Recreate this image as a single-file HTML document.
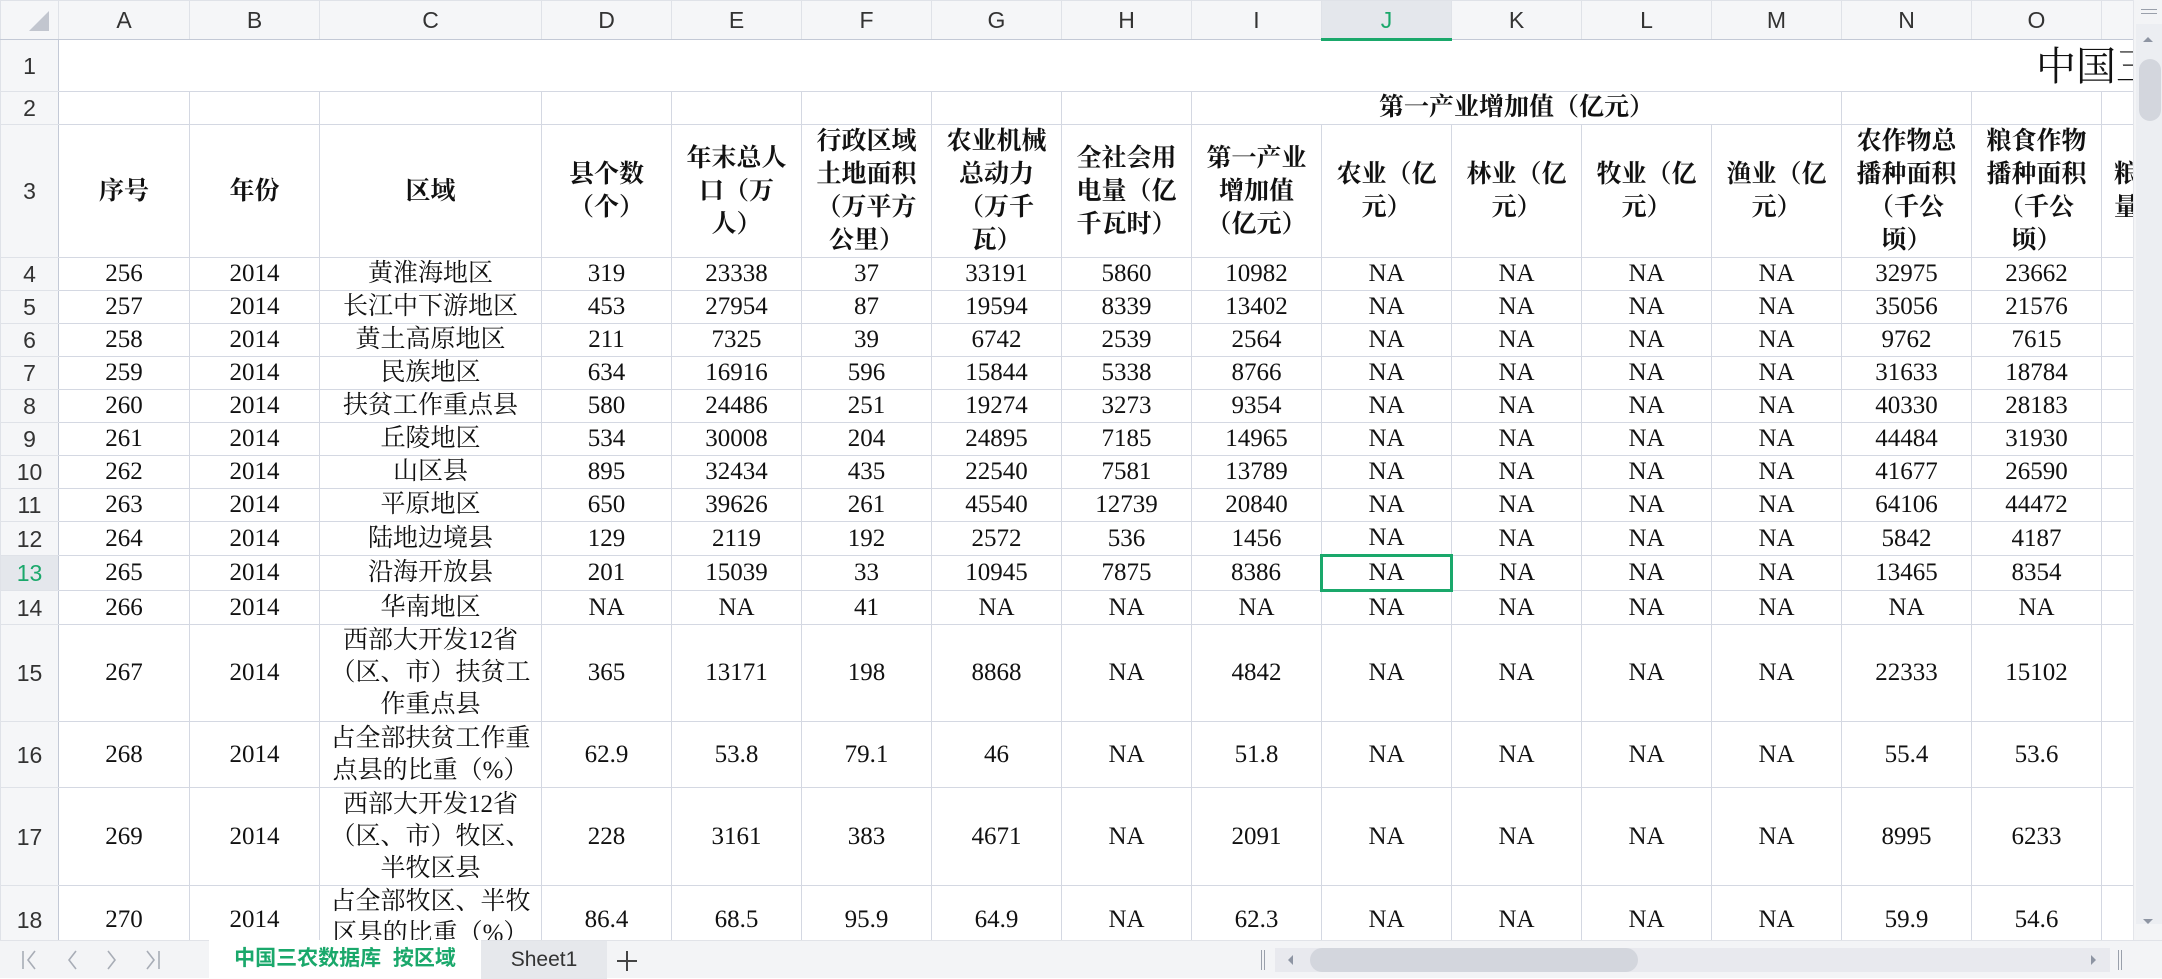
<!DOCTYPE html>
<html><head><meta charset="utf-8">
<style>
*{margin:0;padding:0;box-sizing:border-box}
body{width:2162px;height:978px;overflow:hidden;background:#fff;font-family:"Liberation Serif","Noto Serif CJK SC",serif;position:relative}
#grid{position:absolute;left:0;top:0;width:2133px;height:940px;overflow:hidden}
table{border-collapse:collapse;table-layout:fixed;width:2240px}
td{border:1px solid #d4d8e2;text-align:center;vertical-align:middle;font-size:25px;line-height:32px;color:#111;white-space:nowrap;overflow:hidden;padding:0}
tr.ch td{background:#f5f6f8;font-family:"Liberation Sans",sans-serif;font-size:23px;color:#333;border-color:#dfe2e8;border-bottom:1px solid #c3c9d6;height:39px}
td.rh{background:#f5f6f8;font-family:"Liberation Sans",sans-serif;font-size:23px;color:#333;border-color:#dfe2e8;border-right:1px solid #c3c9d6}
tr.h3 td:not(.rh){font-weight:bold;font-family:"Liberation Serif","Noto Serif CJK SC",serif;font-size:25px;line-height:33px;color:#111}
tr.r td{height:32.6px}
.sel{color:#1aa86b!important}
</style></head><body>
<div id="grid">
<table>
<colgroup><col style="width:58px"><col style="width:131px"><col style="width:130px"><col style="width:222px"><col style="width:130px"><col style="width:130px"><col style="width:130px"><col style="width:130px"><col style="width:130px"><col style="width:130px"><col style="width:130px"><col style="width:130px"><col style="width:130px"><col style="width:130px"><col style="width:130px"><col style="width:130px"><col style="width:140px"></colgroup>
<tr class="ch"><td><svg width="30" height="30" style="display:block;margin:4px 0 0 22px"><path d="M6 24 L26 24 L26 4 Z" fill="#c2c6cf"/></svg></td><td>A</td><td>B</td><td>C</td><td>D</td><td>E</td><td>F</td><td>G</td><td>H</td><td>I</td><td style="background:#e4e7ec;color:#1aa86b;border-bottom:3px solid #1aa86b">J</td><td>K</td><td>L</td><td>M</td><td>N</td><td>O</td><td></td></tr>
<tr><td class="rh" style="height:52px">1</td><td colspan="16" style="border-left:none"></td></tr>
<tr><td class="rh" style="height:32px">2</td><td></td><td></td><td></td><td></td><td></td><td></td><td></td><td></td><td colspan="5" style="font-weight:bold;font-size:25px">第一产业增加值（亿元）</td><td></td><td></td><td></td></tr>
<tr class="h3"><td class="rh" style="height:130px">3</td><td>序号</td><td>年份</td><td>区域</td><td>县个数<br>（个）</td><td>年末总人<br>口（万<br>人）</td><td>行政区域<br>土地面积<br>（万平方<br>公里）</td><td>农业机械<br>总动力<br>（万千<br>瓦）</td><td>全社会用<br>电量（亿<br>千瓦时）</td><td>第一产业<br>增加值<br>（亿元）</td><td>农业（亿<br>元）</td><td>林业（亿<br>元）</td><td>牧业（亿<br>元）</td><td>渔业（亿<br>元）</td><td>农作物总<br>播种面积<br>（千公<br>顷）</td><td>粮食作物<br>播种面积<br>（千公<br>顷）</td><td style="text-align:left;padding-left:12px">粮<br>量</td></tr>
<tr class="r"><td class="rh">4</td><td>256</td><td>2014</td><td>黄淮海地区</td><td>319</td><td>23338</td><td>37</td><td>33191</td><td>5860</td><td>10982</td><td>NA</td><td>NA</td><td>NA</td><td>NA</td><td>32975</td><td>23662</td><td></td></tr>
<tr class="r"><td class="rh">5</td><td>257</td><td>2014</td><td>长江中下游地区</td><td>453</td><td>27954</td><td>87</td><td>19594</td><td>8339</td><td>13402</td><td>NA</td><td>NA</td><td>NA</td><td>NA</td><td>35056</td><td>21576</td><td></td></tr>
<tr class="r"><td class="rh">6</td><td>258</td><td>2014</td><td>黄土高原地区</td><td>211</td><td>7325</td><td>39</td><td>6742</td><td>2539</td><td>2564</td><td>NA</td><td>NA</td><td>NA</td><td>NA</td><td>9762</td><td>7615</td><td></td></tr>
<tr class="r"><td class="rh">7</td><td>259</td><td>2014</td><td>民族地区</td><td>634</td><td>16916</td><td>596</td><td>15844</td><td>5338</td><td>8766</td><td>NA</td><td>NA</td><td>NA</td><td>NA</td><td>31633</td><td>18784</td><td></td></tr>
<tr class="r"><td class="rh">8</td><td>260</td><td>2014</td><td>扶贫工作重点县</td><td>580</td><td>24486</td><td>251</td><td>19274</td><td>3273</td><td>9354</td><td>NA</td><td>NA</td><td>NA</td><td>NA</td><td>40330</td><td>28183</td><td></td></tr>
<tr class="r"><td class="rh">9</td><td>261</td><td>2014</td><td>丘陵地区</td><td>534</td><td>30008</td><td>204</td><td>24895</td><td>7185</td><td>14965</td><td>NA</td><td>NA</td><td>NA</td><td>NA</td><td>44484</td><td>31930</td><td></td></tr>
<tr class="r"><td class="rh">10</td><td>262</td><td>2014</td><td>山区县</td><td>895</td><td>32434</td><td>435</td><td>22540</td><td>7581</td><td>13789</td><td>NA</td><td>NA</td><td>NA</td><td>NA</td><td>41677</td><td>26590</td><td></td></tr>
<tr class="r"><td class="rh">11</td><td>263</td><td>2014</td><td>平原地区</td><td>650</td><td>39626</td><td>261</td><td>45540</td><td>12739</td><td>20840</td><td>NA</td><td>NA</td><td>NA</td><td>NA</td><td>64106</td><td>44472</td><td></td></tr>
<tr class="r"><td class="rh">12</td><td>264</td><td>2014</td><td>陆地边境县</td><td>129</td><td>2119</td><td>192</td><td>2572</td><td>536</td><td>1456</td><td>NA</td><td>NA</td><td>NA</td><td>NA</td><td>5842</td><td>4187</td><td></td></tr>
<tr class="r"><td class="rh sel" style="background:#e4e7ec">13</td><td>265</td><td>2014</td><td>沿海开放县</td><td>201</td><td>15039</td><td>33</td><td>10945</td><td>7875</td><td>8386</td><td style="border:3px solid #1aa86b">NA</td><td>NA</td><td>NA</td><td>NA</td><td>13465</td><td>8354</td><td></td></tr>
<tr class="r"><td class="rh">14</td><td>266</td><td>2014</td><td>华南地区</td><td>NA</td><td>NA</td><td>41</td><td>NA</td><td>NA</td><td>NA</td><td>NA</td><td>NA</td><td>NA</td><td>NA</td><td>NA</td><td>NA</td><td></td></tr>
<tr><td class="rh" style="height:97px">15</td><td>267</td><td>2014</td><td>西部大开发12省<br>（区、市）扶贫工<br>作重点县</td><td>365</td><td>13171</td><td>198</td><td>8868</td><td>NA</td><td>4842</td><td>NA</td><td>NA</td><td>NA</td><td>NA</td><td>22333</td><td>15102</td><td></td></tr>
<tr><td class="rh" style="height:66px">16</td><td>268</td><td>2014</td><td>占全部扶贫工作重<br>点县的比重（%）</td><td>62.9</td><td>53.8</td><td>79.1</td><td>46</td><td>NA</td><td>51.8</td><td>NA</td><td>NA</td><td>NA</td><td>NA</td><td>55.4</td><td>53.6</td><td></td></tr>
<tr><td class="rh" style="height:98px">17</td><td>269</td><td>2014</td><td>西部大开发12省<br>（区、市）牧区、<br>半牧区县</td><td>228</td><td>3161</td><td>383</td><td>4671</td><td>NA</td><td>2091</td><td>NA</td><td>NA</td><td>NA</td><td>NA</td><td>8995</td><td>6233</td><td></td></tr>
<tr><td class="rh" style="vertical-align:top;padding-top:18px;height:98px">18</td><td style="vertical-align:top;padding-top:18px">270</td><td style="vertical-align:top;padding-top:18px">2014</td><td style="vertical-align:top;padding-top:0px">占全部牧区、半牧<br>区县的比重（%）</td><td style="vertical-align:top;padding-top:18px">86.4</td><td style="vertical-align:top;padding-top:18px">68.5</td><td style="vertical-align:top;padding-top:18px">95.9</td><td style="vertical-align:top;padding-top:18px">64.9</td><td style="vertical-align:top;padding-top:18px">NA</td><td style="vertical-align:top;padding-top:18px">62.3</td><td style="vertical-align:top;padding-top:18px">NA</td><td style="vertical-align:top;padding-top:18px">NA</td><td style="vertical-align:top;padding-top:18px">NA</td><td style="vertical-align:top;padding-top:18px">NA</td><td style="vertical-align:top;padding-top:18px">59.9</td><td style="vertical-align:top;padding-top:18px">54.6</td><td></td></tr>
</table>
<div style="position:absolute;left:2036px;top:42px;font-size:40px;line-height:50px;white-space:nowrap;color:#111;font-family:'Liberation Serif','Noto Serif CJK SC',serif">中国三</div>
</div>
<div style="position:absolute;left:2133px;top:0;width:29px;height:940px;background:#f3f4f6;border-left:1px solid #e3e5ea">
<div style="position:absolute;left:7px;top:9px;width:16px;height:1px;background:#9aa0ab"></div>
<div style="position:absolute;left:7px;top:13px;width:16px;height:1px;background:#9aa0ab"></div>
<div style="position:absolute;left:2px;top:24px;width:27px;height:900px;background:#eceef2"></div>
<svg style="position:absolute;left:8px;top:35px" width="12" height="8"><path d="M1 7 L6 2 L11 7 Z" fill="#8e95a3"/></svg>
<div style="position:absolute;left:5px;top:59px;width:22px;height:62px;border-radius:11px;background:#d3d6dd"></div>
<svg style="position:absolute;left:8px;top:918px" width="12" height="8"><path d="M1 1 L6 6 L11 1 Z" fill="#8e95a3"/></svg>
</div>
<div style="position:absolute;left:0;top:940px;width:2162px;height:38px;background:#f3f4f6;border-top:1px solid #e1e3e8;font-family:'Liberation Sans','Noto Sans CJK SC',sans-serif">
<svg style="position:absolute;left:20px;top:8px" width="150" height="22" stroke="#a8adb6" stroke-width="1.6" fill="none"><path d="M3 2 V20 M15 2 L8 11 L15 20"/><path d="M56 2 L49 11 L56 20"/><path d="M88 2 L95 11 L88 20"/><path d="M127 2 L134 11 L127 20 M139 2 V20"/></svg>
<div style="position:absolute;left:209px;top:-1px;width:272px;height:39px;background:#fff;color:#1aa86b;font-weight:bold;font-size:21px;line-height:38px;text-align:center">中国三农数据库&nbsp;&nbsp;按区域</div>
<div style="position:absolute;left:481px;top:0;width:126px;height:38px;background:#e6e8ec;color:#333;font-size:21px;line-height:38px;text-align:center">Sheet1</div>
<svg style="position:absolute;left:615px;top:8px" width="24" height="24" stroke="#444" stroke-width="2"><path d="M12 2 V22 M2 12 H22"/></svg>
<div style="position:absolute;left:1261px;top:9px;width:4px;height:20px;border-left:1px solid #9aa0ab;border-right:1px solid #9aa0ab"></div>
<div style="position:absolute;left:1275px;top:7px;width:835px;height:24px;background:#e8e9ee"></div>
<svg style="position:absolute;left:1286px;top:13px" width="8" height="12"><path d="M7 1 L2 6 L7 11 Z" fill="#8e95a3"/></svg>
<div style="position:absolute;left:1310px;top:7px;width:328px;height:24px;border-radius:12px;background:#d3d6dd"></div>
<svg style="position:absolute;left:2090px;top:13px" width="8" height="12"><path d="M1 1 L6 6 L1 11 Z" fill="#8e95a3"/></svg>
<div style="position:absolute;left:2118px;top:9px;width:4px;height:20px;border-left:1px solid #9aa0ab;border-right:1px solid #9aa0ab"></div>
</div>
</body></html>
